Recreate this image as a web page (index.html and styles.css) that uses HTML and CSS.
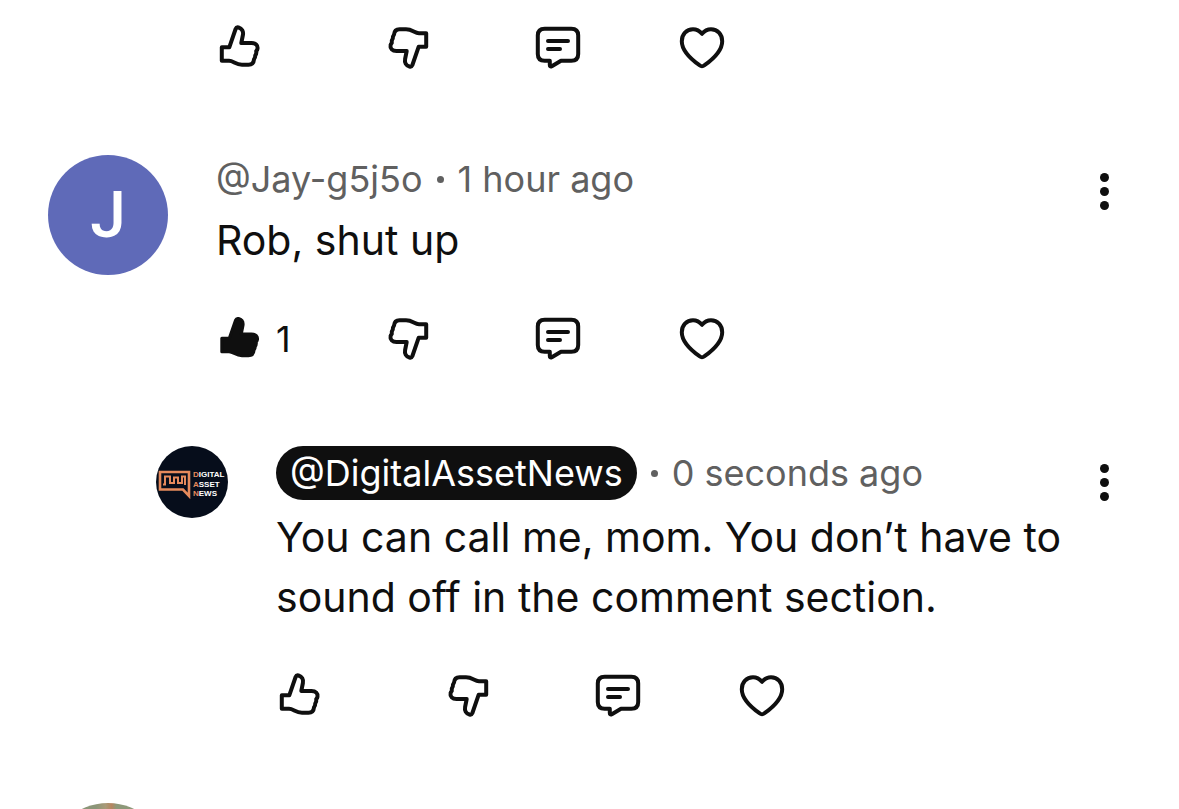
FILE: index.html
```html
<!DOCTYPE html>
<html lang="en">
<head>
    <meta charset="UTF-8">
    <meta name="viewport" content="width=device-width, initial-scale=1.0">
    <title>Comments</title>
    <link rel="stylesheet" href="styles.css">
</head>
<body>
    <!-- shared icons -->
    <svg class="sprite" aria-hidden="true">
        <symbol id="thumb" viewBox="0 0 48 48">
            <path d="M5.8 23.300H13.300L19.600 5Q20.400 3 22.500 3.500C26 4.500 27.600 7.500 26.900 11L25.300 19H35.500C39.800 19 42 21.600 41.500 24.600Q41.300 26 40.200 27.200Q40.700 29.700 39.200 31.500Q39.400 33.700 38 35.300C37.700 38.800 36 40.700 32.500 40.700H26C19.500 40.700 17.500 36.800 13 36.800H5.800Z"/>
        </symbol>
        <symbol id="reply" viewBox="0 0 48 48">
            <path d="M10.7 4.8H37.3Q44.2 4.8 44.2 11.5V30Q44.2 36.7 37.3 36.7H27L17.8 42.2Q15.8 43.2 15.8 41V36.7H10.7Q3.8 36.7 3.8 30V11.5Q3.8 4.8 10.7 4.8ZM14 17H34M14 25H26"/>
        </symbol>
        <symbol id="heart" viewBox="0 0 48 48">
            <path d="M24 9.8C21.5 6.8 18.5 5.3 15 5.3C8.5 5.3 3.8 10.3 3.8 17.2C3.8 27.5 13.5 35.5 21.5 41.2Q24 43.2 26.5 41.2C34.5 35.5 44.2 27.5 44.2 17.2C44.2 10.3 39.5 5.3 33 5.3C29.5 5.3 26.5 6.8 24 9.8Z"/>
        </symbol>
    </svg>

    <main class="comments">
        <article class="comment">
            <div class="content">
                <div class="actions">
                    <button class="like" aria-label="Like"><svg class="icon"><use href="#thumb"/></svg></button>
                    <button class="dislike" aria-label="Dislike"><svg class="icon" viewBox="0 0 48 48"><use href="#thumb" width="48" height="48" transform="rotate(180 24 23)"/></svg></button>
                    <button class="reply-button" aria-label="Reply"><svg class="icon"><use href="#reply"/></svg></button>
                    <button aria-label="Heart"><svg class="icon"><use href="#heart"/></svg></button>
                </div>
            </div>
        </article>

        <article class="comment">
            <div class="avatar">J</div>
            <div class="content">
                <div class="meta">
                    <span>@Jay-g5j5o</span>
                    <span class="dot"></span>
                    <span>1 hour ago</span>
                </div>
                <p class="text">Rob, shut up</p>
                <div class="actions">
                    <button class="like liked" aria-label="Like"><svg class="icon"><use href="#thumb"/></svg><span class="count">1</span></button>
                    <button class="dislike" aria-label="Dislike"><svg class="icon" viewBox="0 0 48 48"><use href="#thumb" width="48" height="48" transform="rotate(180 24 23)"/></svg></button>
                    <button class="reply-button" aria-label="Reply"><svg class="icon"><use href="#reply"/></svg></button>
                    <button aria-label="Heart"><svg class="icon"><use href="#heart"/></svg></button>
                </div>
            </div>
            <button class="menu" aria-label="More"><span></span><span></span><span></span></button>
        </article>

        <article class="comment reply">
            <svg class="avatar-small" viewBox="0 0 72 72" role="img" aria-label="Digital Asset News">
                <circle cx="36" cy="36" r="36" fill="#060d1b"/>
                <g fill="none" stroke="#e58a5c">
                    <path d="M4 26H33V50L27 43.5H4Z" stroke-width="2.6"/>
                    <path d="M7 38.500H9V30.500H14V37H18V31.500H22V37H26V30.500H29V39" stroke-width="2"/>
                </g>
                <g class="logo-text">
                    <text x="37" y="31"><tspan class="initial">D</tspan>IGITAL</text>
                    <text x="37" y="41"><tspan class="initial">A</tspan>SSET</text>
                    <text x="37" y="50"><tspan class="initial">N</tspan>EWS</text>
                </g>
            </svg>
            <div class="content">
                <div class="meta">
                    <span class="owner">@DigitalAssetNews</span>
                    <span class="dot"></span>
                    <span>0 seconds ago</span>
                </div>
                <p class="text">You can call me, mom. You don’t have to sound off in the comment section.</p>
                <div class="actions">
                    <button class="like" aria-label="Like"><svg class="icon"><use href="#thumb"/></svg></button>
                    <button class="dislike" aria-label="Dislike"><svg class="icon" viewBox="0 0 48 48"><use href="#thumb" width="48" height="48" transform="rotate(180 24 23)"/></svg></button>
                    <button class="reply-button" aria-label="Reply"><svg class="icon"><use href="#reply"/></svg></button>
                    <button aria-label="Heart"><svg class="icon"><use href="#heart"/></svg></button>
                </div>
            </div>
            <button class="menu" aria-label="More"><span></span><span></span><span></span></button>
        </article>

        <article class="comment">
            <div class="avatar photo"></div>
        </article>
    </main>
</body>
</html>
```
FILE: styles.css
```css
* {
    box-sizing: border-box;
}
body {
    margin: 0;
    height: 100vh;
    overflow: hidden;
    background-color: #fff;
    color: #0f0f0f;
    font-family: Inter, "Liberation Sans", sans-serif;
}
button {
    display: flex;
    align-items: center;
    padding: 0;
    border: none;
    background: none;
    color: inherit;
    font-family: inherit;
    cursor: pointer;
}
.sprite {
    display: none;
}
.comments {
    display: flex;
    flex-direction: column;
    gap: 83px;
    padding: 24px 48px 0;
}
.comment {
    display: grid;
    grid-template-columns: 168px 1fr 54px;
}
.comment .content {
    grid-column: 2;
}
.comment.reply {
    grid-template-columns: 120px 1fr 54px;
    padding-left: 108px;
}
.avatar {
    display: flex;
    justify-content: center;
    align-items: center;
    width: 120px;
    height: 120px;
    border-radius: 50%;
    background-color: #5f6ab8;
    color: #fff;
    font-family: Roboto, sans-serif;
    font-size: 64px;
    font-weight: 500;
}
.photo {
    background: linear-gradient(90deg, #8b9578 40%, #a99a78 48%, #b5855f 53%, #8d9879 57%);
}
.avatar-small {
    width: 72px;
    height: 72px;
}
.logo-text {
    fill: #fff;
    font-family: "Liberation Sans", sans-serif;
    font-size: 8px;
    font-weight: bold;
}
.initial {
    fill: #e58a5c;
}
.meta {
    display: flex;
    align-items: center;
    min-height: 48px;
    margin-bottom: 7px;
    color: #606060;
    font-size: 36px;
    white-space: nowrap;
}
.owner {
    padding: 0 14px;
    border-radius: 27px;
    background-color: #0f0f0f;
    color: #fff;
    line-height: 54px;
}
.dot {
    width: 7px;
    height: 7px;
    margin: 0 14px;
    border-radius: 50%;
    background-color: #606060;
}
.text {
    margin: 0;
    font-size: 41px;
    line-height: 60px;
}
.actions {
    display: flex;
}
.text + .actions {
    margin-top: 45px;
}
.like {
    width: 168px;
}
.dislike {
    width: 150px;
}
.reply-button {
    width: 144px;
}
.icon {
    display: block;
    width: 48px;
    height: 48px;
    fill: none;
    stroke: currentColor;
    stroke-width: 4;
    stroke-linecap: round;
    stroke-linejoin: round;
}
.liked .icon {
    fill: currentColor;
    stroke-width: 3;
}
.count {
    margin-left: 12px;
    font-size: 36px;
}
.menu {
    flex-direction: column;
    gap: 5px;
    justify-self: end;
    align-self: start;
    width: 54px;
    padding-top: 18px;
}
.menu span {
    width: 9px;
    height: 9px;
    border-radius: 50%;
    background-color: #0f0f0f;
}
```
